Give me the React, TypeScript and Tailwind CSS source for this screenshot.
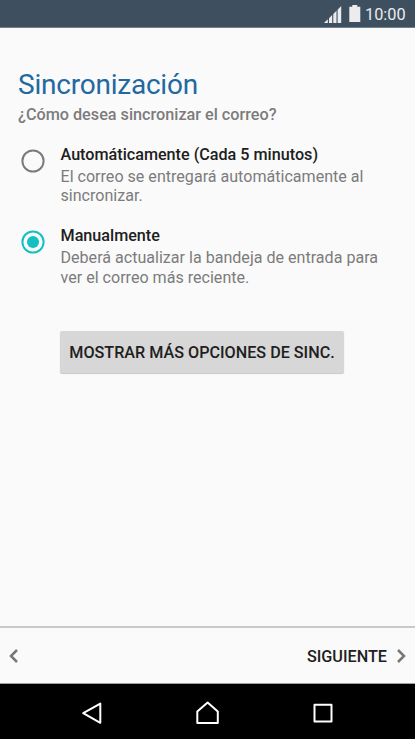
import React, { useState } from "react";

interface SyncOptionProps {
  title: string;
  lines: string[];
  selected: boolean;
  onSelect: () => void;
}

const SyncOption: React.FC<SyncOptionProps> = ({ title, lines, selected, onSelect }) => (
  <button
    role="radio"
    aria-checked={selected}
    onClick={onSelect}
    className="flex w-full items-start text-left"
  >
    <svg width="24" height="24" viewBox="0 0 24 24" className="mt-[4px] ml-[3px] shrink-0">
      <circle
        cx="12"
        cy="12"
        r="10.6"
        fill="none"
        strokeWidth="2"
        className={selected ? "stroke-[#14bfc6]" : "stroke-[#7b7b7b]"}
      />
      {selected && <circle cx="12" cy="12" r="6" className="fill-[#14bfc6]" />}
    </svg>
    <span className="ml-[15.5px] flex flex-col whitespace-nowrap">
      <span className="text-[16.17px] leading-[20px] font-medium text-[#202020]">{title}</span>
      <span className="mt-[2px] flex flex-col text-[16.08px] leading-[19.4px] text-[#7c7c7c]">
        {lines.map((line) => (
          <span key={line}>{line}</span>
        ))}
      </span>
    </span>
  </button>
);

const StatusBar: React.FC = () => (
  <header className="flex h-[28px] shrink-0 items-start border-b border-[#71808b] bg-[#3e5060] pl-[324px] text-[#ececee]">
    <svg width="18" height="18" viewBox="0 0 18 18" fill="currentColor" className="mt-[6px]">
      <path d="M0 17 L3.8 13.3 V17 Z" />
      <path d="M5 12.2 L8.2 9 V17 H5 Z" />
      <path d="M9.3 8 L12.5 4.8 V17 H9.3 Z" />
      <path d="M13.6 3.7 L17.2 0 V17 H13.6 Z" />
    </svg>
    <svg width="12" height="18" viewBox="0 0 12 18" fill="currentColor" className="mt-[5px] ml-[7px]">
      <path d="M3.3 0 H8.3 V1.7 H11.3 V17 H0.3 V1.7 H3.3 Z" />
    </svg>
    <span className="mt-[5px] ml-[4px] text-[16.3px] leading-[20px]">10:00</span>
  </header>
);

const NavigationBar: React.FC = () => (
  <nav className="flex h-[55px] shrink-0 items-start bg-black text-white">
    <button aria-label="Atrás" className="mt-[17px] ml-[81px]">
      <svg width="22" height="24" viewBox="0 0 22 24" fill="none" stroke="currentColor" strokeWidth="2">
        <path d="M2.2 12.2 L19.3 2.6 V21.8 Z" strokeLinejoin="round" />
      </svg>
    </button>
    <button aria-label="Inicio" className="mt-[17px] ml-[92px]">
      <svg width="24" height="24" viewBox="0 0 24 24" fill="none" stroke="currentColor" strokeWidth="2">
        <path d="M2.3 22 V10.5 L12.6 1.5 L22.8 10.5 V22 Z" strokeLinejoin="round" />
      </svg>
    </button>
    <button aria-label="Recientes" className="mt-[19px] ml-[94px]">
      <svg width="20" height="20" viewBox="0 0 20 20" fill="none" stroke="currentColor" strokeWidth="2">
        <rect x="1.5" y="1.7" width="17" height="16.8" strokeLinejoin="round" />
      </svg>
    </button>
  </nav>
);

const App: React.FC = () => {
  const [mode, setMode] = useState<"auto" | "manual">("manual");

  return (
    <div className="flex h-[739px] w-[415px] flex-col overflow-hidden bg-[#fafafa] font-[Roboto,sans-serif]">
      <StatusBar />

      <main className="flex flex-1 flex-col px-[18px] pt-[41px]">
        <h1 className="text-[28px] leading-[32px] tracking-[-0.22px] whitespace-nowrap text-[#23699f]">
          Sincronización
        </h1>
        <p className="mt-[4px] text-[16.22px] leading-[20px] font-medium text-[#7c7c7c]">
          ¿Cómo desea sincronizar el correo?
        </p>

        <div role="radiogroup" className="mt-[20px] flex flex-col gap-[20.6px]">
          <SyncOption
            title="Automáticamente (Cada 5 minutos)"
            lines={["El correo se entregará automáticamente al", "sincronizar."]}
            selected={mode === "auto"}
            onSelect={() => setMode("auto")}
          />
          <SyncOption
            title="Manualmente"
            lines={["Deberá actualizar la bandeja de entrada para", "ver el correo más reciente."]}
            selected={mode === "manual"}
            onSelect={() => setMode("manual")}
          />
        </div>

        <button className="mt-[43.8px] ml-[42px] h-[42px] w-[284px] rounded-[2px] bg-[#d7d7d7] pt-px text-[16.17px] leading-[20px] font-medium whitespace-nowrap text-[#202020] shadow-[0_1px_1px_rgba(0,0,0,0.2)]">
          MOSTRAR MÁS OPCIONES DE SINC.
        </button>
      </main>

      <footer className="flex h-[58px] shrink-0 items-center justify-between border-t-2 border-b border-t-[#c9c9c9] border-b-[#a0a0a0] pr-[9px] pl-[9px]">
        <button aria-label="Anterior" className="text-[#777777]">
          <svg width="9" height="14" viewBox="0 0 9 14" fill="none" stroke="currentColor" strokeWidth="2.5">
            <path d="M8 1 L2 7 L8 13" />
          </svg>
        </button>
        <button className="flex items-center gap-[10px] text-[16.2px] leading-[20px] font-medium text-[#202020]">
          <span className="pt-[2px]">SIGUIENTE</span>
          <svg width="9" height="14" viewBox="0 0 9 14" fill="none" strokeWidth="2.5" className="stroke-[#777777]">
            <path d="M1 1 L7 7 L1 13" />
          </svg>
        </button>
      </footer>

      <NavigationBar />
    </div>
  );
};

export default App;
